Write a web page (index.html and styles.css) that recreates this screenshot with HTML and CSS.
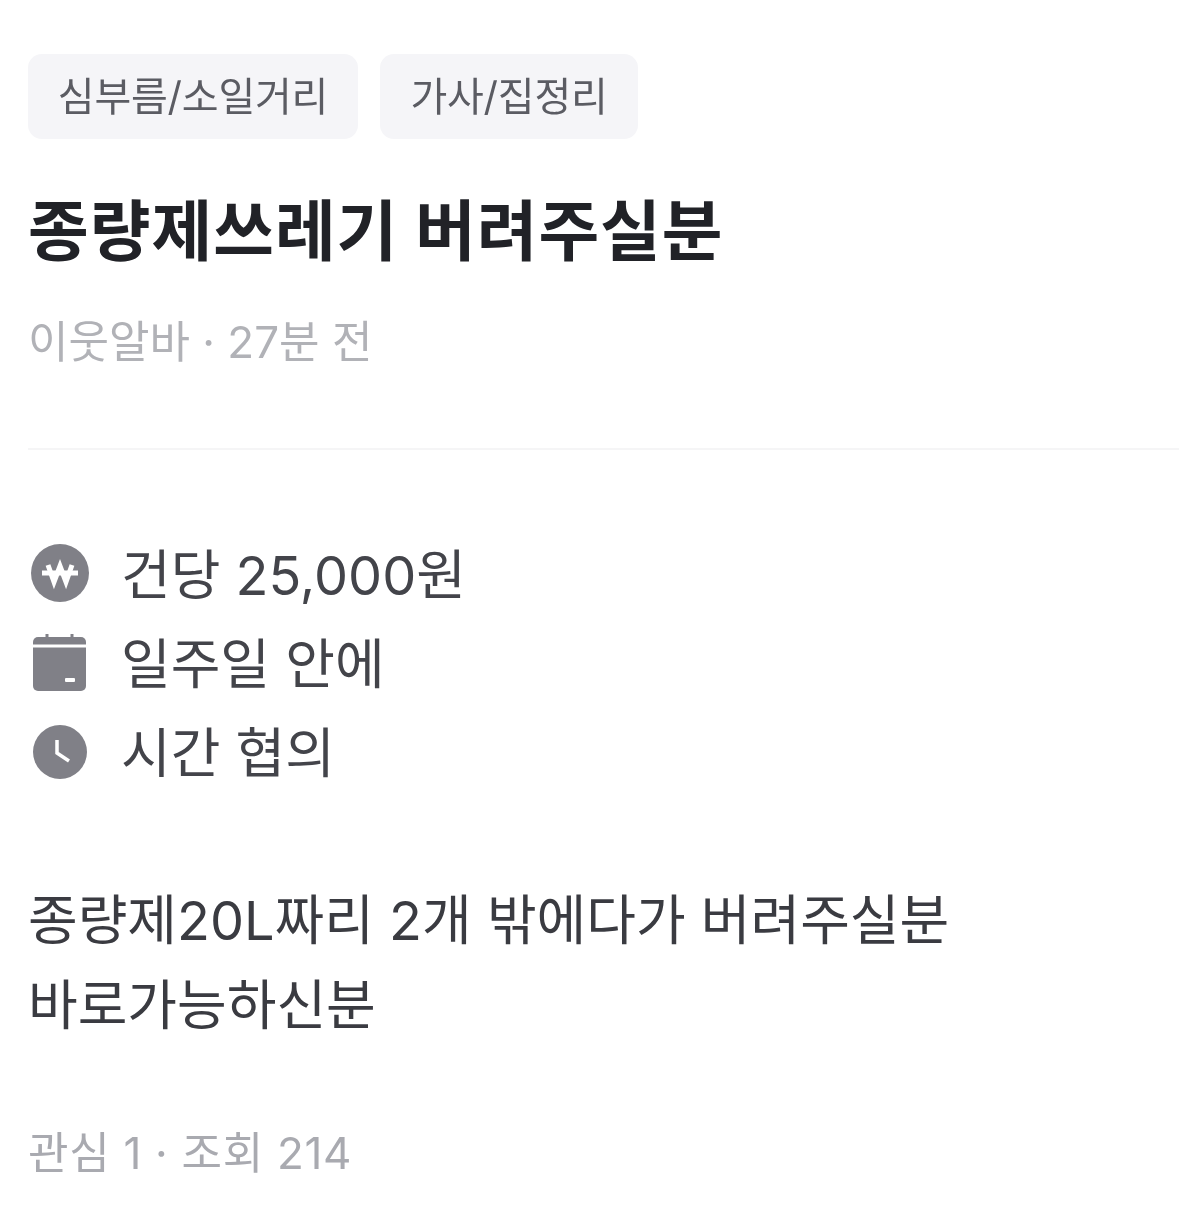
FILE: index.html
```html
<!DOCTYPE html>
<html lang="ko">
<head>
  <title>종량제쓰레기 버려주실분</title>
  <link rel="stylesheet" href="styles.css">
</head>
<body>
  <div class="tags">
    <span class="tag">심부름/소일거리</span>
    <span class="tag tag-small">가사/집정리</span>
  </div>
  <h1 class="title">종량제쓰레기 버려주실분</h1>
  <p class="meta">이웃알바 · 27분 전</p>
  <hr class="line">
  <div class="infos">
    <div class="info">
      <svg class="icon" viewBox="0 0 60 60">
        <circle cx="30" cy="31" r="29" fill="#808087"/>
        <path d="M18 23l6 17 6-16 6 16 6-17" fill="none" stroke="#fff" stroke-width="5"/>
        <path d="M12 31h36" fill="none" stroke="#fff" stroke-width="5"/>
      </svg>
      <span>건당 25,000원</span>
    </div>
    <div class="info">
      <svg class="icon" viewBox="0 0 60 60">
        <rect x="3" y="6" width="53" height="54" rx="5" fill="#808087"/>
        <path d="M3 15h53" stroke="#fff" stroke-width="3"/>
        <path d="M17 3v10M42 3v10" stroke="#808087" stroke-width="3"/>
        <rect x="35" y="47" width="10" height="4" rx="1" fill="#fff"/>
      </svg>
      <span>일주일 안에</span>
    </div>
    <div class="info">
      <svg class="icon" viewBox="0 0 60 60">
        <circle cx="30" cy="32" r="27" fill="#808087"/>
        <path d="M27 20v13l12 8" fill="none" stroke="#fff" stroke-width="3.5"/>
      </svg>
      <span>시간 협의</span>
    </div>
  </div>
  <div class="desc">
    <p>종량제20L짜리 2개 밖에다가 버려주실분</p>
    <p>바로가능하신분</p>
  </div>
  <p class="stats">관심 1 · 조회 214</p>
</body>
</html>
```

FILE: styles.css
```css
body {
  margin: 0;
  padding: 54px 0 0 28px;
  background-color: #fff;
  color: #33343a;
  font-family: Inter, "Noto Sans CJK KR", sans-serif;
  overflow: hidden;
  filter: blur(0.7px);
}

.tags {
  display: flex;
  gap: 22px;
}

.tag {
  display: block;
  width: 330px;
  height: 85px;
  line-height: 86px;
  text-align: center;
  font-size: 40px;
  letter-spacing: -0.2px;
  color: #5b5c63;
  background-color: #f5f5f8;
  border-radius: 14px;
}

.tag-small {
  width: 258px;
}

.title {
  margin: 52px 0 0;
  font-size: 66px;
  line-height: 80px;
  font-weight: 700;
  letter-spacing: 1px;
  color: #212227;
}

.meta {
  margin: 42px 0 0;
  font-size: 44px;
  line-height: 58px;
  color: #b1b2b7;
}

.line {
  margin: 77px 0 0;
  border: 0;
  border-top: 2px solid #f5f5f6;
}

.infos {
  margin-top: 77px;
}

.info {
  display: flex;
  align-items: center;
  gap: 31px;
  height: 89px;
  padding-left: 2px;
  font-size: 54px;
  color: #43444a;
}

.icon {
  width: 60px;
  height: 60px;
  flex: none;
}

.desc {
  margin-top: 84px;
  font-size: 54px;
  line-height: 85px;
  color: #3a3b41;
}

.desc p {
  margin: 0;
}

.stats {
  margin: 76px 0 0;
  font-size: 44px;
  line-height: 58px;
  letter-spacing: 0.7px;
  color: #a9aab0;
}
```
